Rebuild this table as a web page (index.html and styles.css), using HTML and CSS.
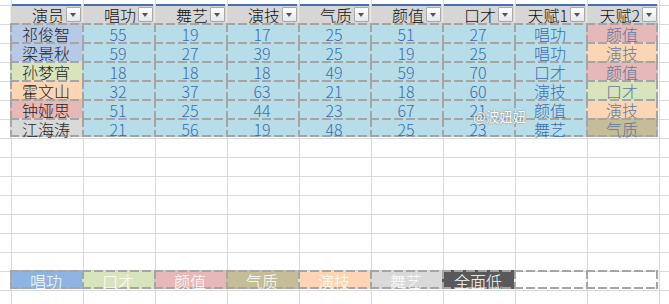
FILE: index.html
```html
<!DOCTYPE html>
<html lang="zh">
<head>
<meta charset="utf-8">
<title>演员天赋表</title>
<link rel="stylesheet" href="styles.css">
</head>
<body>
<div class="sheet">
  <div class="grid">
    <div class="hd">演员<span class="dd"></span></div>
    <div class="hd">唱功<span class="dd"></span></div>
    <div class="hd">舞艺<span class="dd"></span></div>
    <div class="hd">演技<span class="dd"></span></div>
    <div class="hd">气质<span class="dd"></span></div>
    <div class="hd">颜值<span class="dd"></span></div>
    <div class="hd">口才<span class="dd"></span></div>
    <div class="hd">天赋1<span class="dd"></span></div>
    <div class="hd">天赋2<span class="dd"></span></div>

    <div class="cell name c-blue">祁俊智</div>
    <div class="cell num">55</div><div class="cell num">19</div><div class="cell num">17</div><div class="cell num">25</div><div class="cell num">51</div><div class="cell num">27</div>
    <div class="cell num">唱功</div>
    <div class="cell t2 c-pink last-col">颜值</div>

    <div class="cell name c-blue">梁景秋</div>
    <div class="cell num">59</div><div class="cell num">27</div><div class="cell num">39</div><div class="cell num">25</div><div class="cell num">19</div><div class="cell num">25</div>
    <div class="cell num">唱功</div>
    <div class="cell t2 c-peach last-col">演技</div>

    <div class="cell name c-green">孙梦宵</div>
    <div class="cell num">18</div><div class="cell num">18</div><div class="cell num">18</div><div class="cell num">49</div><div class="cell num">59</div><div class="cell num">70</div>
    <div class="cell num">口才</div>
    <div class="cell t2 c-pink last-col">颜值</div>

    <div class="cell name c-peach">霍文山</div>
    <div class="cell num">32</div><div class="cell num">37</div><div class="cell num">63</div><div class="cell num">21</div><div class="cell num">18</div><div class="cell num">60</div>
    <div class="cell num">演技</div>
    <div class="cell t2 c-green last-col">口才</div>

    <div class="cell name c-pink">钟娅思</div>
    <div class="cell num">51</div><div class="cell num">25</div><div class="cell num">44</div><div class="cell num">23</div><div class="cell num">67</div><div class="cell num">21</div>
    <div class="cell num">颜值</div>
    <div class="cell t2 c-peach last-col">演技</div>

    <div class="cell name c-grey last-row">江海涛</div>
    <div class="cell num last-row">21</div><div class="cell num last-row">56</div><div class="cell num last-row">19</div><div class="cell num last-row">48</div><div class="cell num last-row">25</div><div class="cell num last-row">23</div>
    <div class="cell num last-row">舞艺</div>
    <div class="cell t2 c-tan last-row last-col">气质</div>

    <div class="cell legend last-row l-blue">唱功</div>
    <div class="cell legend last-row c-green">口才</div>
    <div class="cell legend last-row c-pink">颜值</div>
    <div class="cell legend last-row c-tan">气质</div>
    <div class="cell legend last-row c-peach">演技</div>
    <div class="cell legend last-row c-grey">舞艺</div>
    <div class="cell legend last-row l-dark">全面低</div>
    <div class="cell legend last-row l-empty"></div>
    <div class="cell legend last-row l-empty last-col"></div>
  </div>
  <div class="watermark">@波妞妞</div>
</div>
</body>
</html>
```
FILE: styles.css
```css
html, body {
  margin: 0;
  padding: 0;
  background: #fff;
}

.sheet {
  position: relative;
  width: 669px;
  height: 304px;
  overflow: hidden;
  padding: 4px 0 0 10px;
  box-sizing: border-box;
  font-family: "Noto Sans CJK SC", "Noto Sans", sans-serif;
  font-size: 16px;
  font-weight: 300;
  background-color: #fff;
  background-image:
    linear-gradient(to right, #d9d9d9 1px, transparent 1px),
    linear-gradient(to bottom, #d9d9d9 1px, transparent 1px);
  background-size: 72px 19px;
  background-position: 11px 5px;
}

.grid {
  display: grid;
  grid-template-columns: repeat(9, 72px);
  grid-template-rows: repeat(15, 19px);
}

/* header */
.hd {
  display: flex;
  align-items: center;
  justify-content: flex-end;
  gap: 2px;
  padding: 2px 1px 0 0;
  box-sizing: border-box;
  color: #111;
  line-height: 16px;
  background-color: #d6d6d6;
  background-image:
    linear-gradient(#4a6ea8, #4a6ea8),
    linear-gradient(#ececec, #ececec);
  background-size: calc(100% - 3px) 2px, 1px 100%;
  background-position: 2px 0, 0 0;
  background-repeat: no-repeat;
}

.dd {
  position: relative;
  width: 15px;
  height: 15px;
  box-sizing: border-box;
  border: 1px solid #a9a9a9;
  border-radius: 1px;
  background: linear-gradient(#ffffff, #e4e7ec);
  flex: none;
}
.dd::after {
  content: "";
  position: absolute;
  left: 3px;
  top: 5px;
  border-left: 3.5px solid transparent;
  border-right: 3.5px solid transparent;
  border-top: 4px solid #555;
}

/* bordered cells */
.cell {
  --h: repeating-linear-gradient(to right, #a5a5a5 0 9px, transparent 9px 12px);
  --v: repeating-linear-gradient(to bottom, #a5a5a5 0 9px, transparent 9px 12px);
  --bg: #b7dee8;
  display: flex;
  align-items: center;
  justify-content: center;
  padding-top: 2px;
  box-sizing: border-box;
  line-height: 16px;
  background-color: var(--bg);
  background-image: var(--h), var(--v), var(--hb, none), var(--vr, none);
  background-size: 100% 2px, 2px 100%, 100% 2px, 2px 100%;
  background-position: 0 0, 0 0, 0 100%, 100% 0;
  background-repeat: no-repeat;
}
.last-col { --vr: var(--v); }
.last-row { --hb: var(--h); }

.name { color: #1e1e1e; }
.num { color: #3b6cb0; }
.t2 { color: #62789e; }

.c-blue { --bg: #b6c9e6; }
.c-green { --bg: #d8e4bc; }
.c-peach { --bg: #fcd5b4; }
.c-pink { --bg: #e6b8b7; }
.c-grey { --bg: #d9d9d9; }
.c-tan { --bg: #c4bd97; }

.legend {
  grid-row: 15;
  color: #fff;
}
.l-blue { --bg: #8db4e2; }
.l-dark { --bg: #595959; }
.l-empty { --bg: transparent; }

.watermark {
  position: absolute;
  left: 473px;
  top: 110px;
  font-size: 13.5px;
  font-weight: 400;
  color: #fff;
  text-shadow: 0 0 1px #777, 0 0 2px #999;
  line-height: 1;
}
```
